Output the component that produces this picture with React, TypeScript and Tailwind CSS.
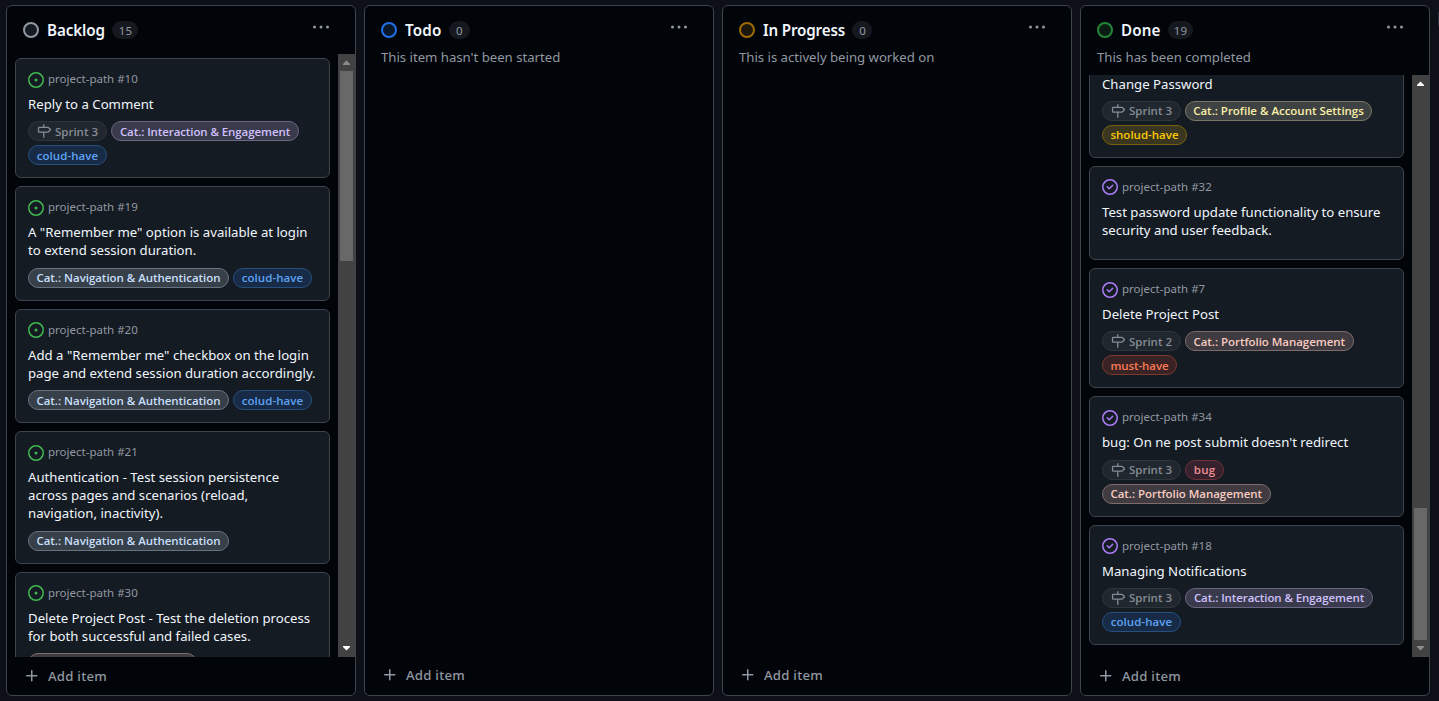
import type { ReactNode } from "react";

type Label = { text: string; style: string };
type Item = { repo?: string; title: string[]; sprint?: number; labels: Label[]; closed?: boolean };

const interaction: Label = {
  text: "Cat.: Interaction & Engagement",
  style: "w-[188px] tracking-[-0.09px] bg-[#393b4d] border-[#6b6684] text-[#d0c0fb]",
};
const navigation: Label = {
  text: "Cat.: Navigation & Authentication",
  style: "w-[201px] tracking-[-0.04px] bg-[#374049] border-[#67747f] text-[#c8dffa]",
};
const profile: Label = {
  text: "Cat.: Profile & Account Settings",
  style: "w-[187px] tracking-[-0.02px] bg-[#3f4242] border-[#7a7967] text-[#f9efa9]",
};
const portfolio: Label = {
  text: "Cat.: Portfolio Management",
  style: "w-[168.5px] tracking-[-0.045px] bg-[#3f3b40] border-[#7d6c6b] text-[#f8ccc0]",
};
const could: Label = {
  text: "colud-have",
  style: "w-[79px] tracking-[0.07px] bg-[#172b46] border-[#27507f] text-[#5ea2f3]",
};
const should: Label = {
  text: "sholud-have",
  style: "w-[85px] bg-[#3a3620] border-[#76630f] text-[#fbca04]",
};
const must: Label = {
  text: "must-have",
  style: "w-[75px] tracking-[-0.1px] bg-[#3a2325] border-[#7b3a2c] text-[#fa7a54]",
};
const bug: Label = {
  text: "bug",
  style: "w-[39px] tracking-[0.2px] bg-[#36222c] border-[#6f303a] text-[#ee8d95]",
};

const backlog: Item[] = [
  { repo: "project-path #10", title: ["Reply to a Comment"], sprint: 3, labels: [interaction, could] },
  {
    repo: "project-path #19",
    title: ['A "Remember me" option is available at login', "to extend session duration."],
    labels: [navigation, could],
  },
  {
    repo: "project-path #20",
    title: ['Add a "Remember me" checkbox on the login', "page and extend session duration accordingly."],
    labels: [navigation, could],
  },
  {
    repo: "project-path #21",
    title: ["Authentication - Test session persistence", "across pages and scenarios (reload,", "navigation, inactivity)."],
    labels: [navigation],
  },
  {
    repo: "project-path #30",
    title: ["Delete Project Post - Test the deletion process", "for both successful and failed cases."],
    labels: [{ ...portfolio, text: "" }],
  },
];

const done: Item[] = [
  { title: ["Change Password"], sprint: 3, labels: [profile, should], closed: true },
  {
    repo: "project-path #32",
    title: ["Test password update functionality to ensure", "security and user feedback."],
    labels: [],
    closed: true,
  },
  { repo: "project-path #7", title: ["Delete Project Post"], sprint: 2, labels: [portfolio, must], closed: true },
  {
    repo: "project-path #34",
    title: ["bug: On ne post submit doesn't redirect"],
    sprint: 3,
    labels: [bug, portfolio],
    closed: true,
  },
  { repo: "project-path #18", title: ["Managing Notifications"], sprint: 3, labels: [interaction, could], closed: true },
];

function Icon({ className, children }: { className: string; children: ReactNode }) {
  return (
    <svg viewBox="0 0 16 16" fill="currentColor" className={`shrink-0 ${className}`}>
      {children}
    </svg>
  );
}

function Opened() {
  return (
    <Icon className="size-4 text-[#3fb950]">
      <path d="M8 9.5a1.5 1.5 0 1 0 0-3 1.5 1.5 0 0 0 0 3Z" />
      <path d="M8 0a8 8 0 1 1 0 16A8 8 0 0 1 8 0ZM1.5 8a6.5 6.5 0 1 0 13 0 6.5 6.5 0 0 0-13 0Z" />
    </Icon>
  );
}

function Closed() {
  return (
    <Icon className="size-4 text-[#ab7df8]">
      <path d="M11.28 6.78a.75.75 0 0 0-1.06-1.06L7.25 8.69 5.78 7.22a.75.75 0 0 0-1.06 1.06l2 2a.75.75 0 0 0 1.06 0l3.5-3.5Z" />
      <path d="M16 8A8 8 0 1 1 0 8a8 8 0 0 1 16 0Zm-1.5 0a6.5 6.5 0 1 0-13 0 6.5 6.5 0 0 0 13 0Z" />
    </Icon>
  );
}

function Milestone() {
  return (
    <Icon className="size-[14px]">
      <path d="M7.75 0a.75.75 0 0 1 .75.75V3h3.634c.414 0 .814.147 1.13.414l2.07 1.75a1.75 1.75 0 0 1 0 2.672l-2.07 1.75a1.75 1.75 0 0 1-1.13.414H8.5v5.25a.75.75 0 0 1-1.5 0V10H2.75A1.75 1.75 0 0 1 1 8.25v-3.5C1 3.784 1.784 3 2.75 3H7V.75A.75.75 0 0 1 7.75 0Zm4.384 8.5a.25.25 0 0 0 .161-.06l2.07-1.75a.248.248 0 0 0 0-.38l-2.07-1.75a.25.25 0 0 0-.161-.06H2.75a.25.25 0 0 0-.25.25v3.5c0 .138.112.25.25.25h9.384Z" />
    </Icon>
  );
}

const chip =
  "box-border flex h-5 items-center justify-center rounded-full border font-['Open_Sans',sans-serif] text-[11.5px] font-[650] leading-[18px] whitespace-nowrap";

function Card({ item }: { item: Item }) {
  return (
    <article className="shrink-0 rounded-md border border-[#3d444d] bg-[#151b23] px-3 pb-3">
      <div className="flex h-9 gap-1 pt-[12.6px] text-[11.5px] leading-4 text-[#9198a1]">
        {item.closed ? <Closed /> : <Opened />}
        {item.repo && <span className="-mt-[0.6px]">{item.repo}</span>}
      </div>
      <h3 className="text-[13.2px] leading-[18.2px] text-[#f0f6fc]">
        {item.title.map((line) => (
          <span key={line} className="block whitespace-nowrap">
            {line}
          </span>
        ))}
      </h3>
      <div className="mt-2 flex flex-wrap gap-1">
        {item.sprint && (
          <span className={`${chip} w-[79px] gap-1 border-[#2f353d] bg-[#21272f] text-[#858c95]`}>
            <Milestone />
            <span className="pt-px">Sprint {item.sprint}</span>
          </span>
        )}
        {item.labels.map((l) => (
          <span key={l.text} className={`${chip} pt-px ${l.style}`}>
            {l.text}
          </span>
        ))}
      </div>
    </article>
  );
}

function Arrow({ down, active }: { down?: boolean; active: boolean }) {
  return (
    <svg viewBox="0 0 17 17" className={`size-[17px] shrink-0 ${active ? "text-white" : "text-[#8b8b8b]"}`}>
      <path d={down ? "M5 6h7v1L8.5 10.5 5 7Z" : "M5 11h7v-1L8.5 6.5 5 10Z"} fill="currentColor" />
    </svg>
  );
}

function Scrollbar({ atTop, thumb }: { atTop: boolean; thumb: string }) {
  return (
    <div className="flex w-[17px] shrink-0 flex-col bg-[#424242]">
      <Arrow active={!atTop} />
      <div className={`flex min-h-0 flex-1 flex-col px-0.5 ${atTop ? "justify-start" : "justify-end"}`}>
        <div className={`bg-[#686868] ${thumb}`} />
      </div>
      <Arrow down active={atTop} />
    </div>
  );
}

type ColumnProps = {
  name: string;
  nameStyle?: string;
  count: number;
  countStyle: string;
  dot: string;
  description?: string;
  footer?: string;
  children?: ReactNode;
};

function Column({ name, nameStyle = "", count, countStyle, dot, description, footer = "", children }: ColumnProps) {
  return (
    <section className="flex w-[350px] shrink-0 flex-col overflow-hidden rounded-md border border-[#3d444d] bg-[#010409]">
      <header className={`flex shrink-0 flex-col pl-4 pr-[26px] ${description ? "h-[69px]" : "h-12"}`}>
        <div className="flex items-center pt-[14px]">
          <span className={`size-4 shrink-0 rounded-full border-2 ${dot}`} />
          <h2 className={`ml-2 h-5 text-[15.2px] font-semibold leading-[21px] text-[#f0f6fc] ${nameStyle}`}>{name}</h2>
          <span
            className={`ml-[7.4px] flex h-[18px] items-center justify-center rounded-full bg-[#15191f] text-[11.5px] leading-[18px] text-[#9198a1] ${countStyle}`}
          >
            <span className="pt-px">{count}</span>
          </span>
          <Icon className="-mt-[6px] ml-auto size-4 text-[#9198a1]">
            <circle cx="1.5" cy="8" r="1.5" />
            <circle cx="8" cy="8" r="1.5" />
            <circle cx="14.5" cy="8" r="1.5" />
          </Icon>
        </div>
        {description && (
          <p className="mt-[7px] text-[13.2px] leading-5 tracking-[-0.02px] text-[#9198a1]">{description}</p>
        )}
      </header>
      <div className="flex min-h-0 flex-1">{children}</div>
      <footer className={`flex h-[38px] shrink-0 items-center gap-2 pl-[17px] text-[#9198a1] ${footer}`}>
        <Icon className="size-4">
          <path d="M7.75 2a.75.75 0 0 1 .75.75V7h4.25a.75.75 0 0 1 0 1.5H8.5v4.25a.75.75 0 0 1-1.5 0V8.5H2.75a.75.75 0 0 1 0-1.5H7V2.75A.75.75 0 0 1 7.75 2Z" />
        </Icon>
        <span className="text-[13.2px] font-medium leading-5 tracking-[0.23px]">Add item</span>
      </footer>
    </section>
  );
}

export default function App() {
  return (
    <main className="flex h-[701px] w-[1439px] gap-2 overflow-hidden bg-[#0d1117] pt-[5px] pb-[5px] pl-[6px] font-['Noto_Sans',sans-serif]">
      <Column
        name="Backlog"
        nameStyle="tracking-[-0.09px]"
        count={15}
        countStyle="w-[26px]"
        dot="border-[#9198a1] bg-[#151b23]"
      >
        <div className="flex min-w-0 flex-1 flex-col gap-2 overflow-hidden px-2 pt-1">
          {backlog.map((item) => (
            <Card key={item.title[0]} item={item} />
          ))}
        </div>
        <Scrollbar atTop thumb="h-[190px]" />
      </Column>
      <Column
        name="Todo"
        nameStyle="tracking-[0.16px]"
        count={0}
        countStyle="w-[21px]"
        dot="border-[#1f6feb] bg-[#0a1728]"
        description="This item hasn't been started"
        footer="pb-0.5"
      />
      <Column
        name="In Progress"
        nameStyle="tracking-[-0.17px]"
        count={0}
        countStyle="w-[20px]"
        dot="border-[#9e6a03] bg-[#1c170e]"
        description="This is actively being worked on"
        footer="pb-0.5"
      />
      <Column
        name="Done"
        nameStyle="tracking-[0.11px]"
        count={19}
        countStyle="w-[25px]"
        dot="border-[#238636] bg-[#0b1c14]"
        description="This has been completed"
      >
        <div className="flex min-w-0 flex-1 flex-col justify-end gap-2 overflow-hidden px-2 pb-[12.2px]">
          {done.map((item) => (
            <Card key={item.title[0]} item={item} />
          ))}
        </div>
        <Scrollbar atTop={false} thumb="h-[132px]" />
      </Column>
      <div className="mt-[3px] h-[22px] w-2 shrink-0 rounded-l-md bg-[#2a313c]" />
    </main>
  );
}
